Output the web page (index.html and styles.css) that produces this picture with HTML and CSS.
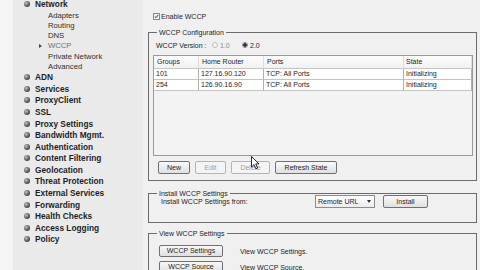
FILE: index.html
```html
<!DOCTYPE html>
<html lang="en">
<head>
<meta charset="utf-8">
<title>WCCP</title>
<link rel="stylesheet" href="styles.css">
</head>
<body>
<div class="page">
  <aside class="sidebar">
    <ul class="nav">
      <li class="nav-item"><span class="bullet"></span>Network</li>
      <li class="sub">Adapters</li>
      <li class="sub">Routing</li>
      <li class="sub">DNS</li>
      <li class="sub current"><span class="arrow"></span>WCCP</li>
      <li class="sub">Private Network</li>
      <li class="sub">Advanced</li>
      <li class="nav-item"><span class="bullet"></span>ADN</li>
      <li class="nav-item"><span class="bullet"></span>Services</li>
      <li class="nav-item"><span class="bullet"></span>ProxyClient</li>
      <li class="nav-item"><span class="bullet"></span>SSL</li>
      <li class="nav-item"><span class="bullet"></span>Proxy Settings</li>
      <li class="nav-item"><span class="bullet"></span>Bandwidth Mgmt.</li>
      <li class="nav-item"><span class="bullet"></span>Authentication</li>
      <li class="nav-item"><span class="bullet"></span>Content Filtering</li>
      <li class="nav-item"><span class="bullet"></span>Geolocation</li>
      <li class="nav-item"><span class="bullet"></span>Threat Protection</li>
      <li class="nav-item"><span class="bullet"></span>External Services</li>
      <li class="nav-item"><span class="bullet"></span>Forwarding</li>
      <li class="nav-item"><span class="bullet"></span>Health Checks</li>
      <li class="nav-item"><span class="bullet"></span>Access Logging</li>
      <li class="nav-item"><span class="bullet"></span>Policy</li>
    </ul>
  </aside>

  <main class="content">
    <div class="enable">
      <span class="checkbox"><svg viewBox="0 0 7 7" width="5" height="5"><path d="M1 3.4 L2.8 5.2 L6 1.2" fill="none" stroke="#2b2b2b" stroke-width="1.3"/></svg></span>
      <span>Enable WCCP</span>
    </div>

    <fieldset class="group config">
      <legend>WCCP Configuration</legend>
      <div class="version">
        <span class="version-label">WCCP Version :</span>
        <span class="option"><span class="radio"></span><span class="muted">1.0</span></span>
        <span class="option"><span class="radio on"></span><span>2.0</span></span>
      </div>
      <div class="list">
        <table class="grid">
          <colgroup><col class="c1"><col class="c2"><col class="c3"><col></colgroup>
          <thead>
            <tr><th>Groups</th><th>Home Router</th><th>Ports</th><th class="state">State</th></tr>
          </thead>
          <tbody>
            <tr><td>101</td><td>127.16.90.120</td><td>TCP: All Ports</td><td>Initializing</td></tr>
            <tr><td>254</td><td>126.90.16.90</td><td>TCP: All Ports</td><td>Initializing</td></tr>
          </tbody>
        </table>
      </div>
      <div class="btn-row">
        <button class="btn w-new">New</button>
        <button class="btn w-edit" disabled>Edit</button>
        <button class="btn w-del" disabled>Delete</button>
        <button class="btn w-refresh">Refresh State</button>
      </div>
    </fieldset>

    <fieldset class="group install">
      <legend>Install WCCP Settings</legend>
      <div class="install-row">
        <span class="install-label">Install WCCP Settings from:</span>
        <span class="select"><span>Remote URL</span><span class="caret"></span></span>
        <button class="btn w-install">Install</button>
      </div>
    </fieldset>

    <fieldset class="group view">
      <legend>View WCCP Settings</legend>
      <div class="view-row">
        <button class="btn w-view">WCCP Settings</button>
        <span class="view-text">View WCCP Settings.</span>
      </div>
      <div class="view-row second">
        <button class="btn w-view">WCCP Source</button>
        <span class="view-text">View WCCP Source.</span>
      </div>
    </fieldset>

    <svg class="cursor" viewBox="0 0 9 14" width="9" height="14"><path d="M0.5 0.5 L0.5 11 L3 8.6 L4.9 12.8 L6.6 12 L4.7 7.9 L8 7.9 Z" fill="#fff" stroke="#111" stroke-width="0.9" stroke-linejoin="round"/></svg>
  </main>
</div>
</body>
</html>
```

FILE: styles.css
```css
* { box-sizing: border-box; }
html, body { margin: 0; padding: 0; }
body {
  width: 480px;
  height: 270px;
  overflow: hidden;
  background: #f0f0f0;
  font-family: "Liberation Sans", Arial, sans-serif;
}
.page { display: flex; height: 270px; }

/* ---------- sidebar ---------- */
.sidebar {
  width: 143px;
  flex: none;
  background: linear-gradient(to right, #f5f5f5 0 13px, #eaeaea 13px);
  overflow: hidden;
}
.nav { list-style: none; margin: -1.4px 0 0; padding: 0; }
.nav-item {
  display: flex;
  align-items: center;
  height: 11.6px;
  padding-left: 24px;
  font-size: 8.3px;
  font-weight: bold;
  color: #1f1f1f;
  white-space: nowrap;
}
.bullet {
  flex: none;
  width: 6px;
  height: 6px;
  margin-right: 5px;
  border-radius: 50%;
  background: radial-gradient(circle at 35% 35%, #c4c4c4 0, #5a5a5a 55%, #262626 100%);
}
.sub {
  display: flex;
  align-items: center;
  height: 10.2px;
  padding-left: 48px;
  font-size: 7.7px;
  color: #2f2f2f;
  white-space: nowrap;
}
.sub.current { padding-left: 39px; color: #707070; }
.arrow {
  width: 0;
  height: 0;
  margin-right: 6px;
  border-left: 3px solid #444;
  border-top: 2.5px solid transparent;
  border-bottom: 2.5px solid transparent;
}

/* ---------- content ---------- */
.content {
  flex: 1;
  position: relative;
  display: flex;
  flex-direction: column;
  padding: 13px 3px 0 5px;
  font-size: 7px;
  color: #1e1e1e;
  white-space: nowrap;
}
.enable { display: flex; align-items: center; height: 7px; margin-left: 5px; gap: 1px; }
.checkbox {
  width: 7px;
  height: 7px;
  border: 1px solid #8c8c8c;
  background: #f6f6f6;
  display: flex;
  align-items: center;
  justify-content: center;
}

.group {
  margin: 0;
  padding: 0 3px 0 5px;
  border: 1px solid #6c6c6c;
  min-width: 0;
}
.group legend {
  height: 9px;
  margin-left: 3px;
  padding: 0 2px;
  font-size: 7px;
  line-height: 9px;
  color: #1e1e1e;
}
.config { margin-top: 8px; padding-bottom: 6px; }

.version { display: flex; align-items: center; height: 10px; margin-top: 3px; padding-left: 2px; }
.version-label { width: 56px; }
.option { display: flex; align-items: center; gap: 2px; width: 30px; }
.muted { color: #8a8a8a; }
.radio {
  width: 6px;
  height: 6px;
  border-radius: 50%;
  border: 1px solid #bdbdbd;
  background: #f6f6f6;
}
.radio.on {
  border-color: #8a8a8a;
  background: radial-gradient(circle, #2a2a2a 0 1.5px, #e6e6e6 2px);
}

.list {
  height: 101px;
  margin: 5px 0 0 -1px;
  border: 1px solid #9a9a9a;
  background: #f3f3f3;
}
.grid { width: 100%; border-collapse: separate; border-spacing: 0; table-layout: fixed; }
.grid .c1 { width: 45px; }
.grid .c2 { width: 65px; }
.grid .c3 { width: 140px; }
.grid th {
  padding: 0 0 0 3px;
  line-height: 12px;
  font-weight: normal;
  text-align: left;
  background: linear-gradient(#fdfdfd, #f1f1f1);
  border-bottom: 1px solid #c6c6c6;
  border-right: 1px solid #dedede;
}
.grid th.state { padding-left: 2px; }
.grid td {
  padding: 0 0 0 2px;
  line-height: 10px;
  background: #fff;
  border-bottom: 1px solid #c3c3c3;
  border-right: 1px solid #b0b0b0;
  overflow: hidden;
}

.btn-row { display: flex; gap: 5px; margin-top: 5px; padding-left: 4px; }
.btn {
  height: 13px;
  padding: 0;
  border: 1px solid #707070;
  border-radius: 2px;
  background: linear-gradient(#f9f9f9, #e0e0e0);
  font-family: inherit;
  font-size: 7px;
  color: #1e1e1e;
  line-height: 11px;
  text-align: center;
}
.btn:disabled {
  border-color: #b4b4b4;
  background: #f4f4f4;
  color: #a0a0a0;
}
.w-new { width: 32px; }
.w-edit { width: 31px; }
.w-del { width: 39px; }
.w-refresh { width: 62px; }
.w-install { width: 45px; }
.w-view { width: 64px; height: 12px; line-height: 10px; }

.install { margin-top: 8px; padding-bottom: 14px; }
.install-row { display: flex; align-items: center; height: 13px; margin-top: -3px; padding-left: 7px; }
.install-label { width: 154px; }
.select {
  width: 60px;
  height: 13px;
  margin-right: 8px;
  padding: 0 3px 0 2px;
  border: 1px solid #8c8c8c;
  background: linear-gradient(#ffffff, #ececec);
  display: flex;
  align-items: center;
  justify-content: space-between;
}
.caret {
  width: 0;
  height: 0;
  border-top: 3px solid #333;
  border-left: 2.5px solid transparent;
  border-right: 2.5px solid transparent;
}

.view { margin-top: 6px; }
.view-row { display: flex; align-items: center; margin-top: 7px; padding-left: 5px; }
.view-row.second { margin-top: 4px; }
.view-text { margin-left: 17px; }

.cursor { position: absolute; left: 108px; top: 156px; }
```
